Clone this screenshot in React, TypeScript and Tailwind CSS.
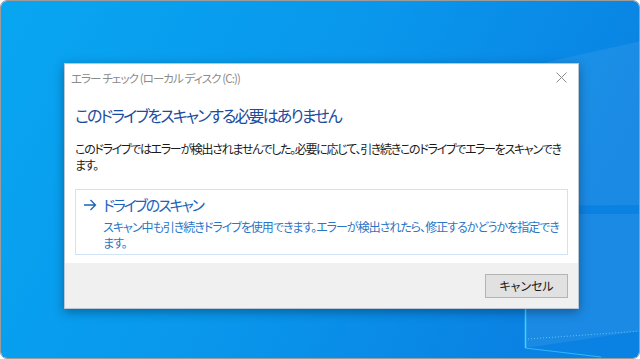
const jp = "font-['Noto_Sans_CJK_JP',sans-serif] [font-feature-settings:'palt']";

const Wallpaper = () => (
  <svg className="absolute inset-0" width="640" height="359" viewBox="0 0 640 359">
    <defs>
      <linearGradient id="bg" x1="0" y1="0" x2="1" y2="0.3">
        <stop offset="0" stopColor="#08a6f2" />
        <stop offset="0.55" stopColor="#0997ec" />
        <stop offset="1" stopColor="#0a82e3" />
      </linearGradient>
    </defs>
    <rect width="640" height="359" fill="url(#bg)" />
    {/* logo panes */}
    <polygon points="524,66 640,40 640,204 524,205" fill="#ffffff" fillOpacity="0.07" />
    <polygon points="524,213 640,213 640,330 524,347" fill="#ffffff" fillOpacity="0.07" />
    <line x1="524.5" y1="300" x2="524.5" y2="347" stroke="#3fd4ff" strokeWidth="1.5" />
    <line x1="524" y1="347" x2="600" y2="356" stroke="#3fd0ff" strokeWidth="1" strokeOpacity="0.7" />
    <line x1="527" y1="338" x2="640" y2="330" stroke="#7fe0ff" strokeWidth="1" strokeDasharray="1 2" strokeOpacity="0.7" />
  </svg>
);

const App = () => {
  return (
    <div className="w-[640px] h-[359px] bg-white">
      <div className="relative w-[640px] h-[359px] rounded-[7px] border border-[#9c9c9c] overflow-hidden">
        <Wallpaper />
        <div className="relative pt-[62px] pl-[63px]">
          <div className={`w-[515px] h-[246px] flex flex-col bg-white border border-[#b9c6d3] shadow-[0_3px_10px_rgba(0,0,0,0.35)] ${jp}`}>
            {/* title bar */}
            <div className="h-[30px] flex items-center justify-between pl-[6px] pr-[11px]">
              <span className="text-[11.5px] tracking-[-0.9px] text-[#8c8c8c]">エラー チェック (ローカル ディスク (C:))</span>
              <svg width="11" height="11" viewBox="0 0 11 11" className="mb-[3px]">
                <path d="M0.5 0.5 L10.5 10.5 M10.5 0.5 L0.5 10.5" stroke="#8a8a8a" strokeWidth="1" />
              </svg>
            </div>

            <div className="flex-1 px-[10px]">
              <h1 className="mt-[9px] text-[16px] tracking-[-1.9px] leading-[24px] text-[#1b4c9e] whitespace-nowrap">
                このドライブをスキャンする必要はありません
              </h1>
              <p className="mt-[14px] text-[12px] tracking-[-1.3px] leading-[16px] text-[#1a1a1a] whitespace-nowrap">
                このドライブではエラーが検出されませんでした。必要に応じて、引き続きこのドライブでエラーをスキャンでき
                <br />
                ます。
              </p>

              <div className="mt-[16px] h-[66px] border border-[#cfe2f6] pt-[5px] pl-[7px] flex">
                <svg width="14" height="12" viewBox="0 0 14 12" className="mt-[4px] shrink-0">
                  <path d="M1 6 H12.5 M7.5 1 L12.5 6 L7.5 11" stroke="#1c62b8" strokeWidth="1.3" fill="none" />
                </svg>
                <div className="ml-[6px]">
                  <div className="text-[15px] tracking-[-2.1px] leading-[20px] text-[#1a64bb] whitespace-nowrap">ドライブのスキャン</div>
                  <div className="mt-[4px] text-[12px] tracking-[-1px] leading-[16px] text-[#2a76c7] whitespace-nowrap">
                    スキャン中も引き続きドライブを使用できます。エラーが検出されたら、修正するかどうかを指定でき
                    <br />
                    ます。
                  </div>
                </div>
              </div>
            </div>

            {/* footer */}
            <div className="h-[45px] bg-[#f0f0f0] flex items-center justify-end pr-[10px]">
              <button className="w-[83px] h-[24px] bg-[#e1e1e1] border border-[#b4b4b4] text-[12px] text-[#1a1a1a]">
                キャンセル
              </button>
            </div>
          </div>
        </div>
      </div>
    </div>
  );
};

export default App;
